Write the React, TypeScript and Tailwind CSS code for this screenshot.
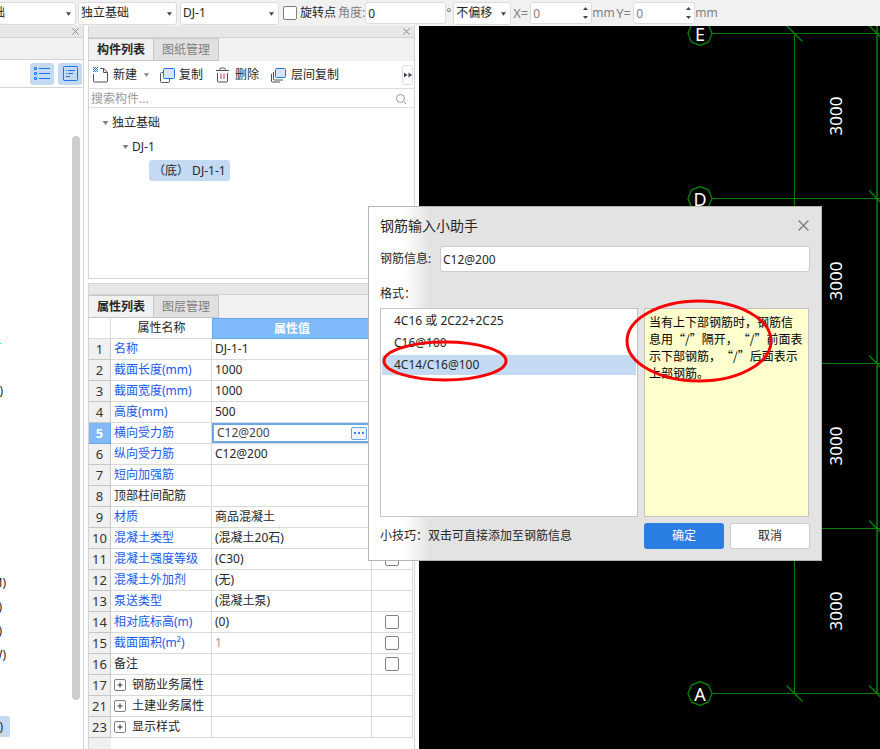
import clsx from "clsx";
import { useState } from "react";

type Property = {
  no: number;
  name: string;
  value?: string;
  plain?: boolean;
  muted?: boolean;
  group?: boolean;
  check?: boolean;
};

const properties: Property[] = [
  { no: 1, name: "名称", value: "DJ-1-1" },
  { no: 2, name: "截面长度(mm)", value: "1000" },
  { no: 3, name: "截面宽度(mm)", value: "1000" },
  { no: 4, name: "高度(mm)", value: "500" },
  { no: 5, name: "横向受力筋", value: "C12@200" },
  { no: 6, name: "纵向受力筋", value: "C12@200" },
  { no: 7, name: "短向加强筋" },
  { no: 8, name: "顶部柱间配筋", plain: true },
  { no: 9, name: "材质", value: "商品混凝土" },
  { no: 10, name: "混凝土类型", value: "(混凝土20石)" },
  { no: 11, name: "混凝土强度等级", value: "(C30)", check: true },
  { no: 12, name: "混凝土外加剂", value: "(无)" },
  { no: 13, name: "泵送类型", value: "(混凝土泵)" },
  { no: 14, name: "相对底标高(m)", value: "(0)", check: true },
  { no: 15, name: "截面面积(m²)", value: "1", muted: true, check: true },
  { no: 16, name: "备注", plain: true, check: true },
  { no: 17, name: "钢筋业务属性", plain: true, group: true },
  { no: 21, name: "土建业务属性", plain: true, group: true },
  { no: 23, name: "显示样式", plain: true, group: true },
];

const formats = ["4C16 或 2C22+2C25", "C16@100", "4C14/C16@100"];

// row index -> visible tail of the scrolled module names
const moduleRows: Record<number, { text: string; className: string }> = {
  10: { text: "-", className: "w-px text-cyan-400" },
  12: { text: ")", className: "w-[3px]" },
  20: { text: "M)", className: "w-[6px]" },
  21: { text: ")", className: "w-[2px]" },
  22: { text: ")", className: "w-[2px]" },
  23: { text: "W)", className: "w-[6px]" },
  26: { text: ")", className: "w-[3px]" },
};

function Arrow({ className }: { className?: string }) {
  return (
    <svg width="6" height="4" viewBox="0 0 6 4" className={className}>
      <path d="M0 0h6L3 4z" fill="currentColor" />
    </svg>
  );
}

function Cross({ size, className }: { size: number; className?: string }) {
  return (
    <svg width={size} height={size} viewBox="0 0 10 10" className={className}>
      <path d="M.5.5l9 9M9.5.5l-9 9" stroke="currentColor" strokeWidth="1.3" fill="none" />
    </svg>
  );
}

function Dropdown({ label, value, className }: { label: string; value: string; className: string }) {
  return (
    <div className={clsx("relative shrink-0", className)}>
      <select
        aria-label={label}
        className="h-[23px] w-full appearance-none rounded-[3px] border border-[#dcdcdc] bg-white pl-[2px]"
      >
        <option>{value}</option>
      </select>
      <Arrow className="pointer-events-none absolute top-[10px] right-[5px] w-[5px] text-[#3c4654]" />
    </div>
  );
}

function Spinner({ id, label }: { id: string; label: string }) {
  return (
    <div className="flex shrink-0 items-center text-[#808080]">
      <label htmlFor={id} className="w-[17px] text-[13px]">
        {label}
      </label>
      <div className="relative w-[62px]">
        <input
          id={id}
          defaultValue="0"
          className="h-[22px] w-full rounded-[3px] border border-[#dcdcdc] bg-white pl-[2px]"
        />
        <div className="absolute top-[5px] right-1 flex flex-col gap-[6px] text-[#3c4654]">
          <svg width="5" height="3" viewBox="0 0 5 3">
            <path d="M0 3h5L2.500 0z" fill="currentColor" />
          </svg>
          <svg width="5" height="3" viewBox="0 0 5 3">
            <path d="M0 0h5L2.500 3z" fill="currentColor" />
          </svg>
        </div>
      </div>
      <span className="w-6">mm</span>
    </div>
  );
}

function TopBar() {
  return (
    <header className="flex h-[26px] shrink-0 items-center bg-[#f1f1f1]">
      <Dropdown label="构件类型" value="独立基础" className="-ml-[46px] w-[122px]" />
      <Dropdown label="构件" value="独立基础" className="ml-[2px] w-[99px]" />
      <Dropdown label="名称" value="DJ-1" className="ml-[3px] w-[99px]" />
      <label className="ml-1 flex shrink-0 items-center gap-[3px]">
        <input type="checkbox" className="size-[14px] appearance-none rounded-[2px] border border-[#808080] bg-white" />
        旋转点
      </label>
      <label htmlFor="angle" className="ml-[2px] shrink-0 text-[#808080]">
        角度:
      </label>
      <input
        id="angle"
        defaultValue="0"
        className="h-[22px] w-[81px] shrink-0 rounded-[3px] border border-[#dcdcdc] bg-white pl-[2px]"
      />
      <span className="w-[7px] shrink-0 text-[#808080]">°</span>
      <Dropdown label="偏移方式" value="不偏移" className="mr-[2px] w-[58px]" />
      <Spinner id="offset-x" label="X=" />
      <Spinner id="offset-y" label="Y=" />
    </header>
  );
}

function LeftPanel() {
  return (
    <aside className="flex w-[84px] shrink-0 flex-col overflow-hidden border-r border-[#d4d4d4]">
      <div className="flex h-3 items-center justify-end border-b border-[#d4d4d4] bg-[#e7e7e7] pr-1">
        <button aria-label="关闭导航">
          <Cross size={7} className="text-[#808080]" />
        </button>
      </div>
      <div className="h-[22px] border-b border-[#d4d4d4] bg-[#f1f1f1]" />
      <div className="flex h-7 items-center justify-end gap-1 border-b border-[#d4d4d4] pr-px">
        <button aria-label="列表" className="flex h-[22px] w-6 items-center justify-center rounded-[3px] bg-[#c3daf2]">
          <svg width="16" height="14" viewBox="0 0 16 14" fill="none" stroke="#1a73e8">
            <path d="M5 1.500h11M5 6.500h11M5 11.500h11" />
            <path d="M.5.5h2v2h-2zM.5 5.500h2v2h-2zM.5 10.500h2v2h-2z" />
          </svg>
        </button>
        <button aria-label="详情" className="flex h-[22px] w-6 items-center justify-center rounded-[3px] bg-[#c3daf2]">
          <svg width="15" height="15" viewBox="0 0 15 15" fill="none" stroke="#1a73e8">
            <rect x=".5" y=".5" width="14" height="14" rx="1" />
            <path d="M3 4.500h1M5 4.500h7M3 7.500h1M5 7.500h5M3 10.500h4" />
          </svg>
        </button>
      </div>
      <div className="flex min-h-0 flex-1 justify-between">
        <ul className="pt-[3px]">
          {Array.from({ length: 27 }, (_, i) => (
            <li
              key={i}
              className={clsx(
                "flex h-6 w-[10px] items-center",
                i === 26 && "rounded-r-[3px] bg-[#c3daf2] bg-clip-content pt-px pb-[2px]"
              )}
            >
              {moduleRows[i] && (
                <span className={clsx("flex justify-end whitespace-nowrap", moduleRows[i].className)}>
                  {moduleRows[i].text}
                </span>
              )}
            </li>
          ))}
        </ul>
        <div className="mt-12 mr-[3px] mb-[49px] w-2 rounded-full bg-[#cdcdcd]" />
      </div>
    </aside>
  );
}

function Tabs({ items }: { items: string[] }) {
  return (
    <div role="tablist" className="flex h-[23px] bg-[#f1f1f1]">
      {items.map((item, i) => (
        <button
          key={item}
          role="tab"
          aria-selected={i === 0}
          className={clsx(
            "h-[23px] w-[65px] border-t border-r border-b border-[#c6c6c6]",
            i === 0 ? "bg-[#f1f1f1] font-bold" : "bg-[#e0e0e0] text-[#808080]"
          )}
        >
          {item}
        </button>
      ))}
    </div>
  );
}

function ComponentToolbar() {
  return (
    <div className="flex h-7 items-center border-b border-[#dedede] pt-px pl-1 whitespace-nowrap">
      <button className="flex items-center gap-1">
        <svg width="16" height="16" viewBox="0 0 16 16" fill="none">
          <path d="M.5 7v7q0 1 1 1h12q1 0 1-1V5.500L11 1.500H7M10.500 1.500V5.500h4" stroke="#4a5160" />
          <path
            d="M0 0h1v1H0zM2 0h1v1H2zM4 0h1v1H4zM1 1h1v1H1zM3 1h1v1H3zM0 2h1v1H0zM2 2h1v1H2zM4 2h1v1H4zM1 3h1v1H1zM3 3h1v1H3zM0 4h1v1H0zM2 4h1v1H2zM4 4h1v1H4z"
            fill="#1a73e8"
          />
        </svg>
        新建
        <Arrow className="ml-[3px] w-[5px] text-[#808080]" />
      </button>
      <button className="ml-[10px] flex items-center gap-1">
        <svg width="16" height="16" viewBox="0 0 16 16" fill="none">
          <path d="M4 5.500H2.500q-1 0-1 1v8q0 1 1 1h7q1 0 1-1V12" stroke="#4a5160" />
          <rect x="4.500" y="1.500" width="11" height="10" rx="1" stroke="#1a73e8" fill="#d6e6fa" />
        </svg>
        复制
      </button>
      <button className="ml-3 flex items-center gap-1">
        <svg width="16" height="16" viewBox="0 0 16 16" fill="none" stroke="#4a5160">
          <path d="M1 3.500h13M4.500 3.500v-1l1-1.500h4l1 1.500v1M2.500 6v8q0 1 1 1h8q1 0 1-1V6" />
          <path d="M6 6.500v5.500M9 6.500v5.500" stroke="#d9303e" />
        </svg>
        删除
      </button>
      <button className="ml-3 flex items-center gap-1">
        <svg width="16" height="16" viewBox="0 0 16 16" fill="none">
          <path d="M.5 7v7q0 1 1 1H9M2.500 5v7q0 1 1 1H12" stroke="#4a5160" />
          <rect x="4.500" y="1.500" width="10" height="9" rx="1" stroke="#1a73e8" fill="#d6e6fa" />
        </svg>
        层间复制
      </button>
      <button
        aria-label="更多"
        className="mr-px ml-auto flex h-5 w-[11px] items-center justify-center rounded-[3px] border border-[#dedede]"
      >
        <svg width="8" height="6" viewBox="0 0 8 6" className="shrink-0" fill="#3c4654">
          <path d="M0 0.500L3.500 3 0 5.500zM4.500 .5L8 3 4.500 5.500z" />
        </svg>
      </button>
    </div>
  );
}

function PropertyTable() {
  let [editing, setEditing] = useState<string>("C12@200");

  return (
    <table className="w-[324px] table-fixed border-separate border-spacing-0">
      <colgroup>
        <col className="w-[22px]" />
        <col className="w-[101px]" />
        <col className="w-[160px]" />
        <col className="w-[41px]" />
      </colgroup>
      <thead>
        <tr className="h-[21px]">
          <th className="border-r border-b border-[#dadada]" />
          <th className="border-b border-[#dadada] font-normal">属性名称</th>
          <th className="border border-[#68a8ea] bg-[#80bafa] text-white">属性值</th>
          <th className="border-r border-b border-[#dadada]" />
        </tr>
      </thead>
      <tbody>
        {properties.map((p) => (
          <tr key={p.no} className="h-[21px]">
            <th
              className={clsx(
                "border-r border-b text-[13px]",
                p.no === 5
                  ? "border-[#68a8ea] bg-[#80bafa] text-white"
                  : "border-[#c6c6c6] bg-[#f0f0f0] font-normal text-[#333333]"
              )}
            >
              {p.no}
            </th>
            <td
              className={clsx(
                "border-r border-b border-[#dadada] pl-[3px] whitespace-nowrap",
                !p.plain && "text-[#1659ee]"
              )}
            >
              {p.group ? (
                <div className="flex items-center gap-[6px]">
                  <button
                    aria-label={"展开" + p.name}
                    className="flex size-3 items-center justify-center rounded-[2px] border border-[#808080]"
                  >
                    <svg width="6" height="6" viewBox="0 0 6 6">
                      <path d="M3 .5v5M.5 3h5" stroke="#333333" />
                    </svg>
                  </button>
                  {p.name}
                </div>
              ) : (
                p.name
              )}
            </td>
            <td
              className={clsx(
                "border-r border-b border-[#dadada]",
                p.no !== 5 && "pl-[3px]",
                p.muted && "text-[#9a9a9a]"
              )}
            >
              {p.no === 5 ? (
                <div className="flex h-5 items-center bg-white pr-1 ring-2 ring-[#68a8ea] ring-inset">
                  <input
                    aria-label={p.name}
                    value={editing}
                    onChange={(e) => setEditing(e.target.value)}
                    className="h-4 min-w-0 flex-1 bg-transparent pl-[5px] text-[#444444] outline-none"
                  />
                  <button
                    aria-label="钢筋输入小助手"
                    className="flex h-[13px] w-4 items-center justify-center rounded-[2px] border border-[#68a8ea] bg-[#eef5fd]"
                  >
                    <svg width="10" height="2" viewBox="0 0 10 2" fill="#3b86dc">
                      <path d="M0 0h2v2H0zM4 0h2v2H4zM8 0h2v2H8z" />
                    </svg>
                  </button>
                </div>
              ) : (
                p.value
              )}
            </td>
            <td className="border-r border-b border-[#dadada]">
              {p.check && (
                <input
                  type="checkbox"
                  aria-label={p.name + "附加"}
                  className="mx-auto block size-[14px] appearance-none rounded-[2px] border border-[#808080] bg-white"
                />
              )}
            </td>
          </tr>
        ))}
      </tbody>
    </table>
  );
}

function MiddlePanel() {
  return (
    <section className="ml-1 flex w-[327px] shrink-0 flex-col">
      <div className="border border-t-0 border-[#d4d4d4]">
        <div className="flex h-3 items-center justify-end border-b border-[#d4d4d4] bg-[#e7e7e7] pr-1">
          <button aria-label="关闭构件列表">
            <Cross size={7} className="text-[#808080]" />
          </button>
        </div>
        <Tabs items={["构件列表", "图纸管理"]} />
        <ComponentToolbar />
        <div className="flex h-[19px] items-center border-b border-[#dedede] pt-px pr-[7px] pl-[2px]">
          <input
            aria-label="搜索构件"
            placeholder="搜索构件..."
            className="min-w-0 flex-1 outline-none placeholder:text-[#999999]"
          />
          <svg width="12" height="12" viewBox="0 0 12 12" fill="none" stroke="#999999">
            <circle cx="5.500" cy="5.500" r="4" />
            <path d="M8.500 8.500L11 11" />
          </svg>
        </div>
        <ul className="h-[170px] pt-[3px] pl-[13px]">
          <li className="flex h-6 items-center gap-[3px]">
            <Arrow className="w-[7px] text-[#808080]" />
            独立基础
          </li>
          <li className="flex h-6 items-center gap-[3px] pl-5">
            <Arrow className="w-[7px] text-[#808080]" />
            DJ-1
          </li>
          <li className="flex h-[22px] items-center pl-[47px]">
            <span className="rounded-[3px] bg-[#c3daf2] py-[3px] pr-1 pl-1 leading-[15px]">（底） DJ-1-1</span>
          </li>
        </ul>
      </div>
      <div className="mt-1 flex-1 border border-b-0 border-[#d4d4d4]">
        <div className="h-[11px] border-b border-[#d4d4d4] bg-[#e7e7e7]" />
        <Tabs items={["属性列表", "图层管理"]} />
        <PropertyTable />
        <div className="h-24 w-[22px] bg-[#f0f0f0]" />
      </div>
    </section>
  );
}

function AxisBubble({ y, name }: { y: number; name: string }) {
  return (
    <g transform={`translate(281 ${y})`}>
      <path
        d="M0-12l8.500 3.500L12 0 8.500 8.500 0 12l-8.500-3.500L-12 0l3.500-8.500z"
        fill="none"
        stroke="#008000"
        strokeWidth="1.4"
      />
      <text y="7" textAnchor="middle" fontSize="18" fill="#ffffff">
        {name}
      </text>
    </g>
  );
}

function Drawing() {
  return (
    <main className="ml-1 min-w-0 flex-1 bg-black">
      <svg className="block h-full w-full">
        <path d="M375.500 8v660" stroke="#008000" />
        <path d="M458 0v668" stroke="#006400" strokeWidth="2" />
        {[7.5, 172.5, 337.5, 502.5, 667.5].map((y) => (
          <g key={y} stroke="#008000">
            <line x1="293" x2="100%" y1={y} y2={y} />
            <line x1="450" x2="466" y1={y - 8} y2={y + 8} strokeWidth="1.4" />
          </g>
        ))}
        <path d="M367.500-.5l16 16M367.500 659.500l16 16" stroke="#008000" strokeWidth="1.4" />
        <AxisBubble y={7.5} name="E" />
        <AxisBubble y={172.5} name="D" />
        <AxisBubble y={667.5} name="A" />
        {[90, 255, 420, 585].map((y) => (
          <text key={y} transform={`translate(423 ${y}) rotate(-90)`} textAnchor="middle" fontSize="17" fill="#ffffff">
            3000
          </text>
        ))}
      </svg>
    </main>
  );
}

function RebarDialog() {
  let [rebar, setRebar] = useState<string>("C12@200");
  let [selected, setSelected] = useState<number>(2);

  return (
    <div
      role="dialog"
      aria-labelledby="dialog-title"
      className="absolute top-[206px] left-[368px] w-[454px] border border-[#b4b4b4] bg-linear-to-r from-white from-[36px] to-[#e3e3e3] to-[60px] px-[11px] pb-[11px]"
    >
      <div className="flex h-[39px] items-center justify-between pb-[2px]">
        <h2 id="dialog-title" className="text-sm leading-4">
          钢筋输入小助手
        </h2>
        <button aria-label="关闭" className="mr-px">
          <Cross size={11} className="text-[#808080]" />
        </button>
      </div>
      <div className="flex items-center">
        <label htmlFor="rebar" className="w-[60px]">
          钢筋信息:
        </label>
        <input
          id="rebar"
          value={rebar}
          onChange={(e) => setRebar(e.target.value)}
          className="h-[26px] min-w-0 flex-1 rounded-[3px] border border-[#cccccc] bg-white pl-[2px]"
        />
      </div>
      <p className="pt-[14px] pb-[6px]">格式：</p>
      <div className="flex h-[209px] gap-[6px]">
        <ul className="flex-1 border border-[#c4c4c4] bg-white px-px pt-px">
          {formats.map((f, i) => (
            <li key={f} className="py-px">
              <button
                onClick={() => setSelected(i)}
                className={clsx("block h-5 w-full pl-3 text-left", selected === i && "bg-[#c3daf2]")}
              >
                {f}
              </button>
            </li>
          ))}
        </ul>
        <p className="mr-px w-[165px] border border-[#c4c4c4] bg-[#ffffcd] pt-1 pl-1 font-['Noto_Sans_CJK_SC',sans-serif] leading-[17px] whitespace-nowrap text-black [text-spacing-trim:space-all]">
          当有上下部钢筋时，钢筋信
          <br />
          息用“/”隔开，“/”前面表
          <br />
          示下部钢筋，“/”后面表示
          <br />
          上部钢筋。
        </p>
      </div>
      <div className="mt-[6px] flex items-center gap-[6px]">
        <p className="flex-1">小技巧：双击可直接添加至钢筋信息</p>
        <button className="h-[26px] w-20 rounded-[3px] bg-[#2c7fe2] text-white">确定</button>
        <button className="h-[26px] w-20 rounded-[3px] border border-[#cccccc] bg-white">取消</button>
      </div>
      <svg className="pointer-events-none absolute top-0 left-0 h-full w-full overflow-visible" fill="none" stroke="#fa0000">
        <ellipse cx="76" cy="154" rx="61" ry="19" strokeWidth="3" />
        <ellipse cx="330" cy="134" rx="72" ry="40" strokeWidth="3" />
      </svg>
    </div>
  );
}

export default function App() {
  return (
    <div className="relative flex h-screen flex-col overflow-hidden bg-white font-['Noto_Sans','Noto_Sans_CJK_SC',sans-serif] text-xs leading-4 text-[#262626]">
      <TopBar />
      <div className="flex min-h-0 flex-1">
        <LeftPanel />
        <MiddlePanel />
        <Drawing />
      </div>
      <RebarDialog />
    </div>
  );
}
